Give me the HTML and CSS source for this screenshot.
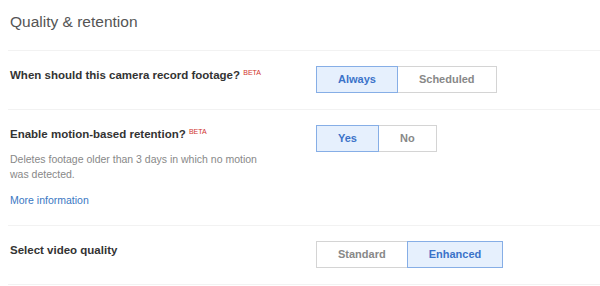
FILE: index.html
```html
<!DOCTYPE html>
<html>
<head>
<meta charset="utf-8">
<link rel="stylesheet" href="styles.css">
</head>
<body>
<div class="panel">
  <h2 class="title">Quality &amp; retention</h2>
  <div class="row">
    <div class="info">
      <div class="label">When should this camera record footage? <sup class="beta">BETA</sup></div>
    </div>
    <div class="seg">
      <span class="btn on">Always</span><span class="btn">Scheduled</span>
    </div>
  </div>
  <div class="row tall">
    <div class="info">
      <div class="label">Enable motion-based retention? <sup class="beta">BETA</sup></div>
      <p class="desc">Deletes footage older than 3 days in which no motion was detected.</p>
      <a class="link" href="#">More information</a>
    </div>
    <div class="seg">
      <span class="btn on">Yes</span><span class="btn">No</span>
    </div>
  </div>
  <div class="row">
    <div class="info">
      <div class="label">Select video quality</div>
    </div>
    <div class="seg">
      <span class="btn">Standard</span><span class="btn on">Enhanced</span>
    </div>
  </div>
</div>
</body>
</html>
```
FILE: styles.css
```css
html, body {
  margin: 0;
  padding: 0;
  background: #fff;
}
body {
  font-family: "Liberation Sans", Arial, sans-serif;
}
.panel {
  padding-left: 8px;
}
.title {
  margin: 0;
  height: 51px;
  box-sizing: border-box;
  padding: 13px 0 0 2px;
  font-size: 15.5px;
  line-height: 18px;
  font-weight: normal;
  color: #555;
  border-bottom: 1px solid #f2f2f2;
}
.row {
  display: flex;
  padding: 15px 0 16px 2px;
  border-bottom: 1px solid #f2f2f2;
}
.info {
  width: 306px;
}
.label {
  font-size: 11.5px;
  font-weight: bold;
  color: #333;
  line-height: 18px;
}
.beta {
  font-size: 7px;
  line-height: 0;
  color: #d0342c;
  font-weight: normal;
  vertical-align: 4px;
}
.desc {
  margin: 9px 0 0;
  font-size: 10.5px;
  line-height: 15px;
  color: #888;
  width: 260px;
}
.link {
  display: block;
  margin: 11px 0 2px;
  font-size: 10.5px;
  line-height: 14px;
  color: #3a78c3;
  text-decoration: none;
}
.seg {
  display: flex;
  align-items: flex-start;
}
.btn {
  height: 25px;
  line-height: 25px;
  padding: 0 21px;
  border: 1px solid #d4d4d4;
  font-size: 11px;
  font-weight: bold;
  color: #888;
  background: #fff;
}
.btn + .btn {
  margin-left: -1px;
}
.btn.on {
  background: #e6f0fd;
  border-color: #86aee6;
  color: #3b73c9;
  position: relative;
}
```
